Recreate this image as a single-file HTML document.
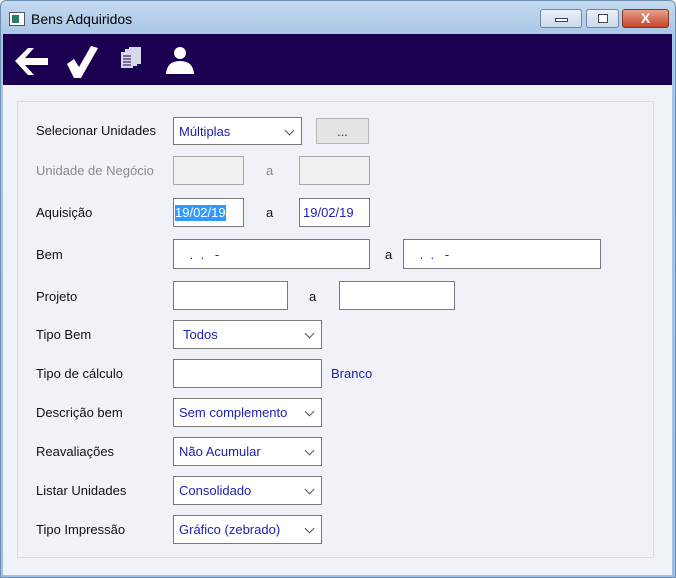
<!DOCTYPE html>
<html><head><meta charset="utf-8"><style>
*{margin:0;padding:0;box-sizing:border-box}
body{width:676px;height:578px;overflow:hidden;font-family:"Liberation Sans",sans-serif;font-size:13px;background:#fff;position:relative}
.win{position:absolute;left:0;top:0;width:676px;height:578px;background:linear-gradient(#c4d9ee,#a9c6e6 34px,#9cc0e4);border:1px solid #6f8fb0;border-radius:6px 6px 0 0}
.title{position:absolute;left:30px;top:10px;font-size:14px;color:#000}
.ticon{position:absolute;left:8px;top:11px;width:16px;height:14px;background:#fff;border:1px solid #556;}
.ticon:before{content:"";position:absolute;left:2px;top:2px;width:7px;height:8px;background:#2a7a6a}
.tb{position:absolute;top:8px;height:19px;border:1px solid #6d86a8;border-radius:3px;background:linear-gradient(#eaf1f9,#c9d9ec)}
.close{background:linear-gradient(#e8a08a,#c6442b);border-color:#8a3324}
.bar{position:absolute;left:3px;top:34px;width:669px;height:51px;background:#1b0052}
.content{position:absolute;left:3px;top:85px;width:669px;height:490px;background:#f1f2f8}
.panel{position:absolute;left:17px;top:101px;width:637px;height:457px;border:1px solid #dcdce2}
.l{position:absolute;left:36px;color:#111;white-space:nowrap}
.f{position:absolute;background:#fff;border:1px solid #7a7a7a;color:#2020b0;padding-left:5px;display:flex;align-items:center;white-space:nowrap}
.dis{background:#f0f0f0;border-color:#a8a8a8}
.sel:after{content:"";position:absolute;right:8px;top:9px;width:6px;height:6px;border-right:1.3px solid #555;border-bottom:1.3px solid #555;transform:rotate(45deg)}
.a{position:absolute;color:#111}
</style></head><body>
<div class="win">
<div class="ticon"></div>
<div class="title">Bens Adquiridos</div>
<div class="tb" style="left:539px;width:42px"><div style="position:absolute;left:14px;top:8px;width:13px;height:4px;border:1px solid #445;background:#fff"></div></div>
<div class="tb" style="left:585px;width:33px"><div style="position:absolute;left:11px;top:4px;width:10px;height:9px;border:1px solid #445;background:#fff"></div></div>
<div class="tb close" style="left:621px;width:47px;color:#fff;font-weight:bold;text-align:center;line-height:17px;font-size:14px">X</div>
</div>
<div class="bar">
<svg width="200" height="51" style="position:absolute;left:0;top:0">
<path d="M12 27 L25 14 L31 14 L22 24 L45 24 L45 31 L22 31 L31 41 L25 41 Z" fill="#fff"/>
<path d="M64 30 L71 25 L76 33 L88 12 L95 14 L78 44 L71 44 Z" fill="#fff"/>
<g fill="#d8d8ea"><rect x="118" y="18" width="12" height="16"/><rect x="122" y="15" width="12" height="17"/><rect x="126" y="13" width="12" height="17"/></g>
<g stroke="#1b0052" stroke-width="1"><path d="M120 22h8M120 25h8M120 28h8M120 31h8"/></g>
<circle cx="177" cy="19" r="6" fill="#fff"/>
<path d="M163 40 Q164 27 177 27 Q190 27 191 40 Z" fill="#fff"/>
</svg>
</div>
<div class="content"></div>
<div class="panel"></div>

<div class="l" style="top:123px">Selecionar Unidades</div>
<div class="f sel" style="left:173px;top:117px;width:129px;height:28px">Múltiplas</div>
<div class="f" style="left:316px;top:118px;width:53px;height:26px;background:#e4e4e4;border-color:#b8b8b8;color:#333;justify-content:center;padding:0">...</div>

<div class="l" style="top:163px;color:#8a8a8a">Unidade de Negócio</div>
<div class="f dis" style="left:173px;top:156px;width:71px;height:29px"></div>
<div class="a" style="left:266px;top:163px;color:#8a8a8a">a</div>
<div class="f dis" style="left:299px;top:156px;width:71px;height:29px"></div>

<div class="l" style="top:205px">Aquisição</div>
<div class="f" style="left:173px;top:198px;width:71px;height:29px;padding-left:1px"><span style="background:#3399ff;color:#fff;line-height:16px">19/02/19</span></div>
<div class="a" style="left:266px;top:205px">a</div>
<div class="f" style="left:299px;top:198px;width:71px;height:29px;padding-left:3px">19/02/19</div>

<div class="l" style="top:247px">Bem</div>
<div class="f" style="left:173px;top:239px;width:197px;height:30px;padding-left:12px">&nbsp;.&nbsp;&nbsp;.&nbsp;&nbsp;&nbsp;-</div>
<div class="a" style="left:385px;top:247px">a</div>
<div class="f" style="left:403px;top:239px;width:198px;height:30px;padding-left:12px">&nbsp;.&nbsp;&nbsp;.&nbsp;&nbsp;&nbsp;-</div>

<div class="l" style="top:289px">Projeto</div>
<div class="f" style="left:173px;top:281px;width:115px;height:29px"></div>
<div class="a" style="left:309px;top:289px">a</div>
<div class="f" style="left:339px;top:281px;width:116px;height:29px"></div>

<div class="l" style="top:327px">Tipo Bem</div>
<div class="f sel" style="left:173px;top:320px;width:149px;height:29px;padding-left:9px">Todos</div>

<div class="l" style="top:366px">Tipo de cálculo</div>
<div class="f" style="left:173px;top:359px;width:149px;height:29px"></div>
<div class="a" style="left:331px;top:366px;color:#2020b0">Branco</div>

<div class="l" style="top:405px">Descrição bem</div>
<div class="f sel" style="left:173px;top:398px;width:149px;height:29px">Sem complemento</div>

<div class="l" style="top:444px">Reavaliações</div>
<div class="f sel" style="left:173px;top:437px;width:149px;height:29px">Não Acumular</div>

<div class="l" style="top:483px">Listar Unidades</div>
<div class="f sel" style="left:173px;top:476px;width:149px;height:29px">Consolidado</div>

<div class="l" style="top:522px">Tipo Impressão</div>
<div class="f sel" style="left:173px;top:515px;width:149px;height:29px">Gráfico (zebrado)</div>
</body></html>
